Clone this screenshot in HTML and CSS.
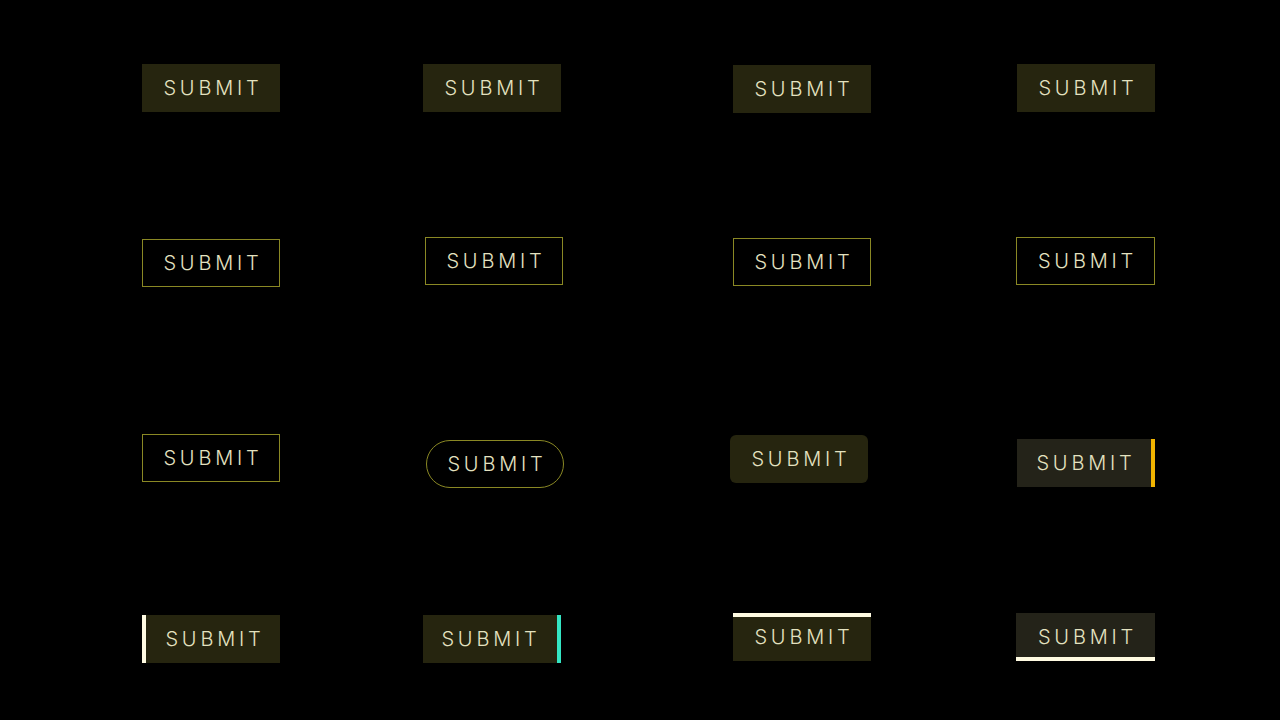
FILE: index.html
```html
<!DOCTYPE html>
<html>
<head>
<meta charset="utf-8">
<link rel="stylesheet" href="styles.css">
</head>
<body>
<main class="grid">
  <button class="btn fill">SUBMIT</button>
  <button class="btn fill">SUBMIT</button>
  <button class="btn fill nudge-r1c3">SUBMIT</button>
  <button class="btn fill">SUBMIT</button>

  <button class="btn outline">SUBMIT</button>
  <button class="btn outline nudge-r2c2">SUBMIT</button>
  <button class="btn outline nudge-r2c3">SUBMIT</button>
  <button class="btn outline nudge-r2c4">SUBMIT</button>

  <button class="btn outline">SUBMIT</button>
  <button class="btn outline pill nudge-r3c2">SUBMIT</button>
  <button class="btn fill rounded nudge-r3c3">SUBMIT</button>
  <button class="btn fill navy bar-right-gold nudge-r3c4">SUBMIT</button>

  <button class="btn fill bar-left">SUBMIT</button>
  <button class="btn fill bar-right-teal">SUBMIT</button>
  <button class="btn fill bar-top nudge-r4c3">SUBMIT</button>
  <button class="btn fill navy bar-bottom nudge-r4c4">SUBMIT</button>
</main>
</body>
</html>
```
FILE: styles.css
```css
html, body {
  margin: 0;
  padding: 0;
  background: #000;
  width: 1280px;
  height: 720px;
  overflow: hidden;
}

.grid {
  display: grid;
  box-sizing: border-box;
  padding: 64px 0 0 142px;
  grid-template-columns: 281px 310px 284px 1fr;
  grid-template-rows: 175px 195px 181px auto;
  justify-items: start;
  align-items: start;
}

.btn {
  box-sizing: border-box;
  width: 138px;
  height: 48px;
  margin: 0;
  padding: 0 0 0 4px;
  border: 0;
  background: transparent;
  color: #e4e2c0;
  font-family: "Inter", "Liberation Sans", sans-serif;
  font-size: 20px;
  font-weight: 300;
  letter-spacing: 3.8px;
  text-align: center;
  line-height: 48px;
  position: relative;
}

.fill { background: #26250f; }
.navy { background: #242319; }

.outline {
  border: 1px solid #8a8824;
  line-height: 46px;
}

.pill { border-radius: 24px; }
.rounded { border-radius: 6px; }

.bar-right-gold { border-right: 4px solid #f2b400; }
.bar-right-teal { border-right: 4px solid #34e6c4; padding-right: 2px; }
.bar-left { border-left: 4px solid #fffbe2; padding-left: 4px; }
.bar-top { box-shadow: inset 0 4px 0 #fffbe2; }
.bar-bottom { box-shadow: inset 0 -4px 0 #fffbe2; }

.nudge-r1c3 { transform: translate(0, 1px); }
.nudge-r2c2 { transform: translate(2px, -2px); }
.nudge-r2c3 { transform: translate(0, -1px); }
.nudge-r2c4 { transform: translate(-1px, -2px); width: 139px; }
.nudge-r3c2 { transform: translate(3px, 6px); }
.nudge-r3c3 { transform: translate(-3px, 1px); }
.nudge-r3c4 { transform: translate(0, 5px); }
.nudge-r4c3 { transform: translate(0, -2px); }
.nudge-r4c4 { transform: translate(-1px, -2px); width: 139px; }
```
